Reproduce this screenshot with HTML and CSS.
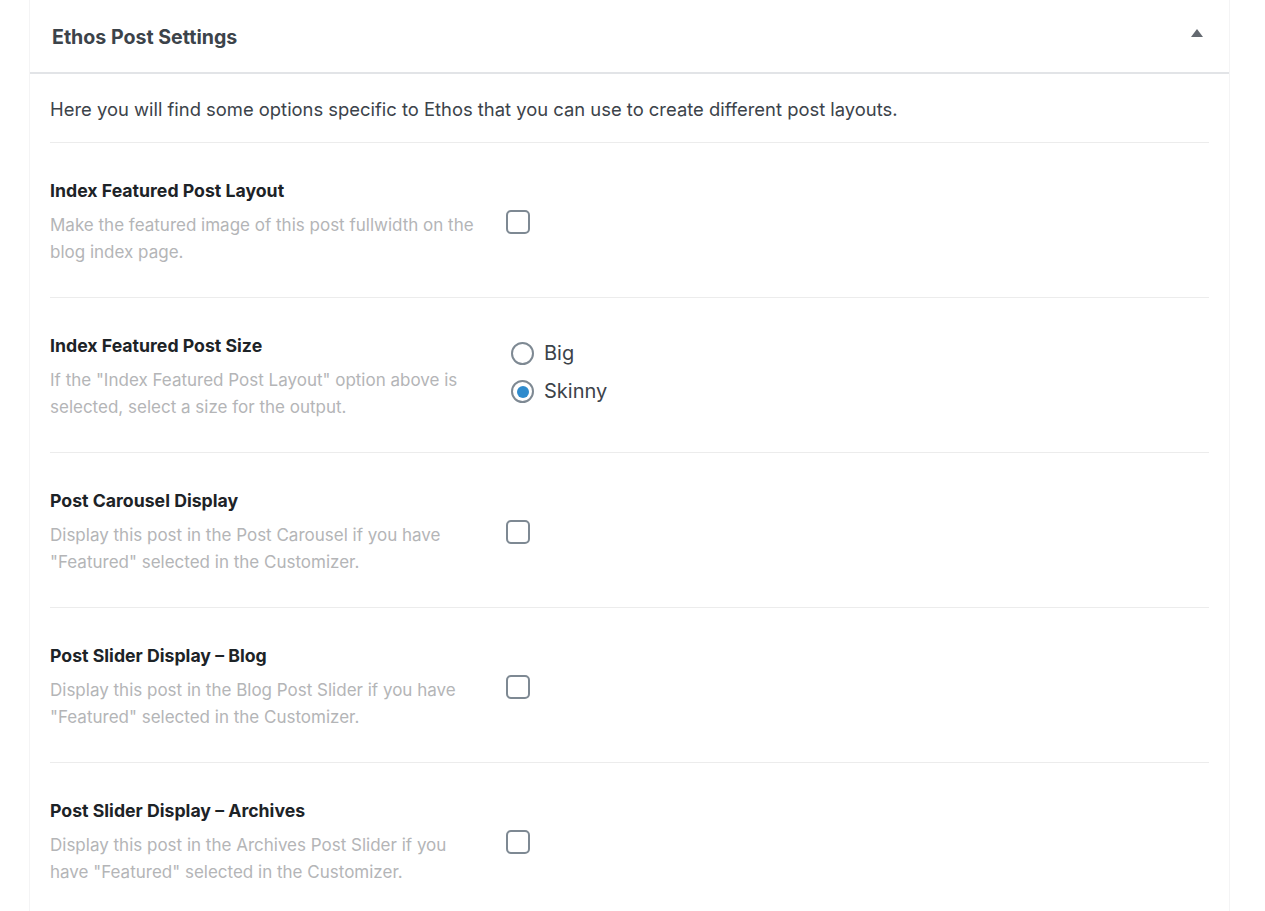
FILE: index.html
```html
<!DOCTYPE html>
<html lang="en">
<head>
<meta charset="utf-8">
<title>Ethos Post Settings</title>
<link rel="stylesheet" href="styles.css">
</head>
<body>
<div class="panel">
  <div class="panel-head">
    <h2 class="panel-title">Ethos Post Settings</h2>
    <span class="toggle" aria-hidden="true">
      <svg width="12" height="8" viewBox="0 0 12 8"><path d="M6 0 L12 8 L0 8 Z" fill="#646970"/></svg>
    </span>
  </div>
  <div class="panel-body">
    <p class="intro">Here you will find some options specific to Ethos that you can use to create different post layouts.</p>

    <div class="row">
      <div class="info">
        <h3 class="row-title">Index Featured Post Layout</h3>
        <p class="row-desc">Make the featured image of this post fullwidth on the blog index page.</p>
      </div>
      <div class="control"><span class="checkbox"></span></div>
    </div>

    <div class="row">
      <div class="info">
        <h3 class="row-title">Index Featured Post Size</h3>
        <p class="row-desc">If the "Index Featured Post Layout" option above is selected, select a size for the output.</p>
      </div>
      <div class="control radios">
        <label class="radio-item"><span class="radio"></span><span class="radio-label">Big</span></label>
        <label class="radio-item"><span class="radio checked"></span><span class="radio-label">Skinny</span></label>
      </div>
    </div>

    <div class="row">
      <div class="info">
        <h3 class="row-title">Post Carousel Display</h3>
        <p class="row-desc">Display this post in the Post Carousel if you have "Featured" selected in the Customizer.</p>
      </div>
      <div class="control"><span class="checkbox"></span></div>
    </div>

    <div class="row">
      <div class="info">
        <h3 class="row-title">Post Slider Display – Blog</h3>
        <p class="row-desc">Display this post in the Blog Post Slider if you have "Featured" selected in the Customizer.</p>
      </div>
      <div class="control"><span class="checkbox"></span></div>
    </div>

    <div class="row">
      <div class="info">
        <h3 class="row-title">Post Slider Display – Archives</h3>
        <p class="row-desc">Display this post in the Archives Post Slider if you have "Featured" selected in the Customizer.</p>
      </div>
      <div class="control"><span class="checkbox"></span></div>
    </div>
  </div>
</div>
</body>
</html>
```

FILE: styles.css
```css
* { box-sizing: border-box; }

html, body {
  margin: 0;
  padding: 0;
  background: #ffffff;
  font-family: Inter, "Liberation Sans", Arial, sans-serif;
  color: #3c434a;
}

.panel {
  margin-left: 29px;
  width: 1201px;
  min-height: 911px;
  border-left: 1px solid #f4f4f5;
  border-right: 1px solid #f4f4f5;
}

.panel-head {
  height: 74px;
  border-bottom: 2px solid #e2e4e7;
  display: flex;
  align-items: center;
  justify-content: space-between;
  padding: 2px 26px 0 22px;
}

.panel-title {
  margin: 0;
  font-size: 19.6px;
  font-weight: 700;
  color: #3c434a;
}

.toggle {
  display: flex;
  margin-top: -8px;
}

.panel-body {
  padding: 0 20px 0 20px;
}

.intro {
  margin: 0;
  padding: 22px 0 19px;
  font-size: 18.4px;
  line-height: 27px;
  color: #3c434a;
}

.row {
  display: flex;
  align-items: flex-start;
  border-top: 1px solid #ececec;
  padding: 36px 0 31px;
  height: 155px;
}

.info {
  width: 432px;
  flex: none;
}

.row-title {
  margin: 0;
  font-size: 17.7px;
  line-height: 24px;
  font-weight: 700;
  color: #1d2327;
}

.row-desc {
  margin: 9px 0 0;
  font-size: 17px;
  line-height: 27px;
  color: #b4b5b7;
}

.control {
  margin-left: 24px;
  padding-top: 31px;
}

.checkbox {
  display: block;
  width: 24px;
  height: 24px;
  border: 2px solid #7e8993;
  border-radius: 5px;
  background: #fff;
}

.radios {
  padding-top: 8px;
  margin-left: 29px;
  display: flex;
  flex-direction: column;
  gap: 15px;
}

.radio-item {
  display: flex;
  align-items: center;
  gap: 10px;
}

.radio {
  width: 23px;
  height: 23px;
  border: 2px solid #7e8993;
  border-radius: 50%;
  background: #fff;
  display: flex;
  align-items: center;
  justify-content: center;
}

.radio.checked::after {
  content: "";
  width: 12px;
  height: 12px;
  border-radius: 50%;
  background: #2f8bcd;
}

.radio-label {
  font-size: 20px;
  line-height: 23px;
  color: #3c434a;
}
```
